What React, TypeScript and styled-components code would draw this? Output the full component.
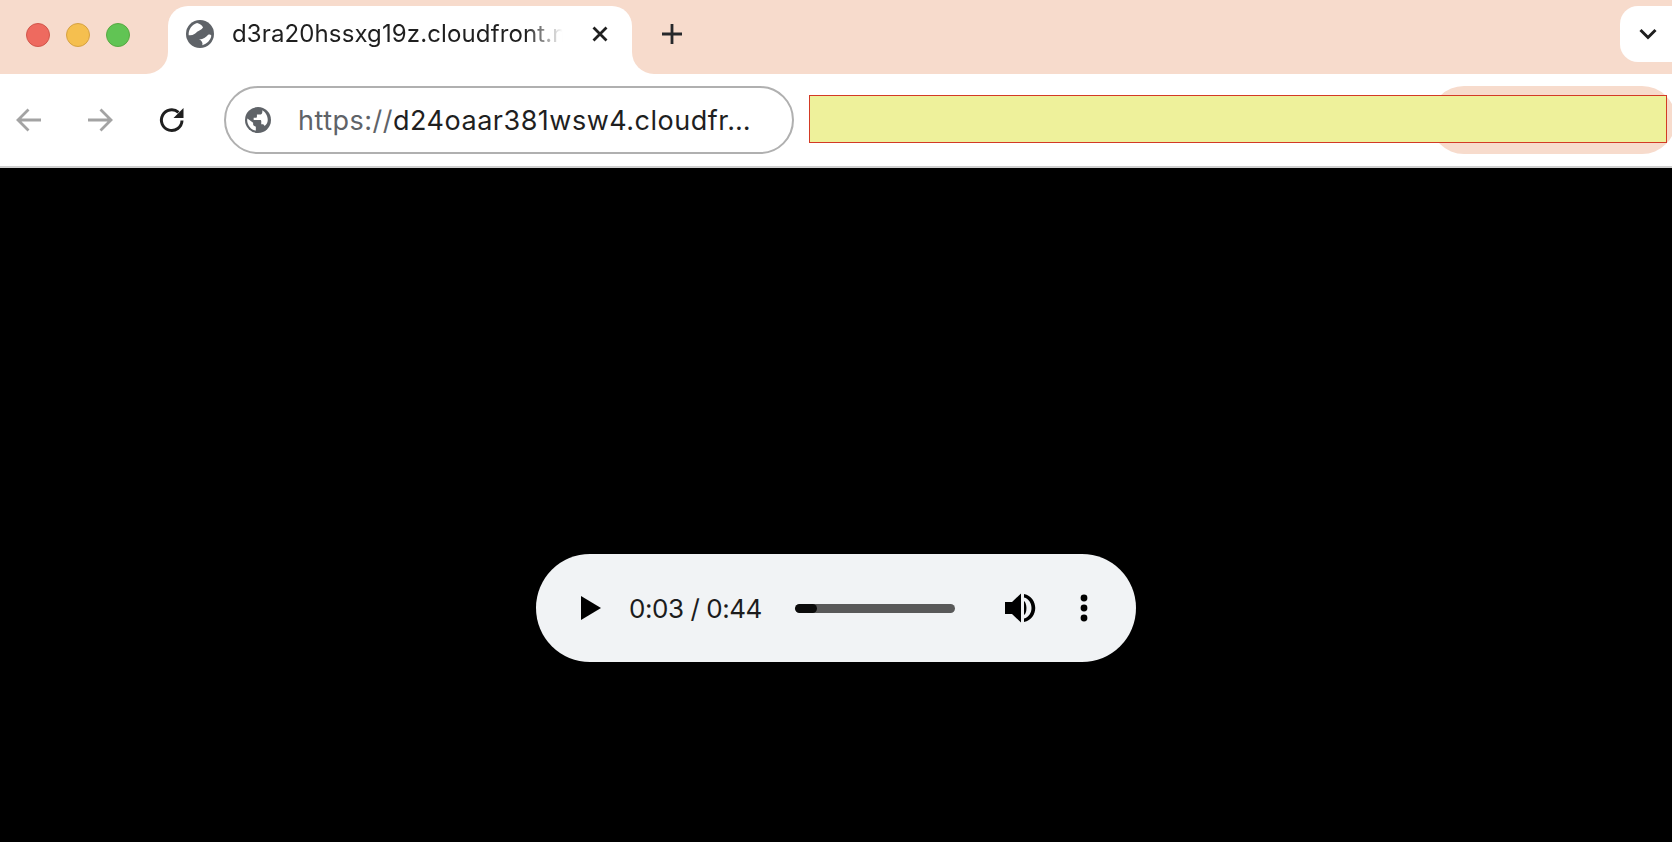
import React from "react";
import styled, { createGlobalStyle } from "styled-components";

const GlobalStyle = createGlobalStyle`
  html, body { margin: 0; padding: 0; background: #000; }
  body { font-family: Inter, "Liberation Sans", sans-serif; overflow: hidden; }
`;

const Page = styled.div`
  width: 1672px;
  height: 842px;
  display: flex;
  flex-direction: column;
  background: #000;
  overflow: hidden;
`;

const TabStrip = styled.div`
  height: 74px;
  display: flex;
  background: #fff;
`;

const StripLeft = styled.div`
  width: 168px;
  background: #f7dbcc;
  border-bottom-right-radius: 22px;
  display: flex;
  align-items: center;
  padding: 1px 0 5px 26px;
  gap: 16px;
  box-sizing: border-box;
`;

const Light = styled.span<{ $fill: string; $edge: string }>`
  width: 24px;
  height: 24px;
  border-radius: 50%;
  background: ${(p) => p.$fill};
  border: 1px solid ${(p) => p.$edge};
  box-sizing: border-box;
`;

const TabSlot = styled.div`
  width: 464px;
  background: #f7dbcc;
  padding-top: 6px;
  box-sizing: border-box;
`;

const Tab = styled.div`
  height: 68px;
  background: #fff;
  border-radius: 20px 20px 0 0;
  display: flex;
  align-items: flex-start;
  padding: 14px 0 0 18px;
  box-sizing: border-box;
`;

const TabTitle = styled.span`
  width: 334px;
  margin-left: 18px;
  font-size: 24px;
  letter-spacing: 0.12px;
  line-height: 28px;
  color: #1f1f1f;
  white-space: nowrap;
  overflow: hidden;
  -webkit-mask-image: linear-gradient(to right, #000 88%, transparent 99%);
  mask-image: linear-gradient(to right, #000 88%, transparent 99%);
`;

const TabClose = styled.svg`
  margin-left: 26px;
  margin-top: 6px;
`;

const StripRight = styled.div`
  flex: 1;
  background: #f7dbcc;
  border-bottom-left-radius: 22px;
  display: flex;
  align-items: flex-start;
  justify-content: space-between;
  padding: 6px 0 0 30px;
`;

const NewTab = styled.svg`
  margin-top: 18px;
`;

const TabMenu = styled.div`
  width: 52px;
  height: 56px;
  background: #fff;
  border-radius: 18px 0 0 18px;
  display: flex;
  align-items: center;
  justify-content: center;
  padding-left: 3px;
  box-sizing: border-box;
`;

const Toolbar = styled.div`
  height: 94px;
  box-sizing: border-box;
  background: #fff;
  border-bottom: 2px solid #cfcfcf;
  display: flex;
  align-items: center;
  position: relative;
  padding-left: 16px;
`;

const NavIcon = styled.svg<{ $gap: number }>`
  margin-right: ${(p) => p.$gap}px;
  flex: none;
`;

const Omnibox = styled.div`
  width: 570px;
  height: 68px;
  box-sizing: border-box;
  border: 2px solid #b0b0b0;
  border-radius: 34px;
  display: flex;
  align-items: center;
  padding-left: 19px;
  font-size: 27px;
  letter-spacing: 0.5px;
  color: #1f1f1f;
  white-space: nowrap;
`;

const Scheme = styled.span`
  color: #5f6368;
`;

const Url = styled.span`
  margin-left: 27px;
`;

const ProfilePill = styled.div`
  margin-left: auto;
  margin-right: -4px;
  flex: none;
  width: 246px;
  height: 68px;
  border-radius: 34px;
  background: #f7dbcc;
`;

const Redaction = styled.div`
  position: absolute;
  left: 809px;
  top: 21px;
  width: 858px;
  height: 48px;
  box-sizing: border-box;
  background: #eef19b;
  border: 1px solid #d33a25;
`;

const Stage = styled.div`
  flex: 1;
  display: flex;
  justify-content: center;
  padding-top: 386px;
`;

const AudioBar = styled.div`
  width: 600px;
  height: 108px;
  background: #f1f3f5;
  border-radius: 54px;
  display: flex;
  align-items: center;
  padding-left: 45px;
  box-sizing: border-box;
`;

const TimeText = styled.span`
  margin-left: 28px;
  width: 136px;
  font-family: Inter, "Liberation Sans", sans-serif;
  font-size: 26px;
  letter-spacing: -0.45px;
  color: #1c1c1c;
  white-space: nowrap;
`;

const Track = styled.div`
  width: 160px;
  height: 9px;
  margin-left: 30px;
  border-radius: 5px;
  background: #595959;
  overflow: hidden;
`;

const TrackFill = styled.div`
  height: 100%;
  border-radius: 5px;
  background: #0b0b0b;
`;

const VolumeIcon = styled.svg`
  margin-left: 50px;
`;

const MoreIcon = styled.svg`
  margin-left: 43px;
`;

const TabGlobe = () => (
  <svg width="28" height="28" viewBox="0 0 24 24">
    <circle cx="12" cy="12" r="12" fill="#5f6368" />
    <path d="M2.3 13 C2 8 5 4 9.5 2.6 C12 3.4 14 4.6 14.6 6.4 C13.5 8.4 11 9 9.5 10 C8.2 11.4 6 13.6 2.3 13Z" fill="#fff" />
    <path d="M11 16.6 C14 17 17 15 19 12.6 C20.4 12 21.4 12.4 21.7 13.6 C21 17.4 18 20.6 14 21.6 C14.6 19.6 13.4 17.6 11 16.6Z" fill="#fff" />
  </svg>
);

const BarGlobe = () => (
  <svg width="26" height="26" viewBox="0 0 24 24">
    <circle cx="12" cy="12" r="12" fill="#5f6368" />
    <path d="M2.2 10.5 L7.5 14.5 V16 C7.5 17.2 8.8 18 10 18 V21.8 C5.6 21.2 2 17 2 12 C2 11.5 2.1 11 2.2 10.5Z" fill="#fff" />
    <path d="M16 3.1 V4.5 C16 5.8 15 7 13.5 7 H11 V9 C11 9.6 10.5 10 10 10 H8 V12 H14 C14.6 12 15 12.4 15 13 V16 H16 C17 16 17.8 16.6 18 17.5 C19.5 16.5 21 14.8 21 12 C21 8 18.5 4.6 16 3.1Z" fill="#fff" />
  </svg>
);

export default function App() {
  return (
    <Page>
      <GlobalStyle />
      <TabStrip>
        <StripLeft>
          <Light $fill="#ee6a5f" $edge="#d1564b" />
          <Light $fill="#f5bf4f" $edge="#d6a243" />
          <Light $fill="#61c454" $edge="#58a942" />
        </StripLeft>
        <TabSlot>
          <Tab>
            <TabGlobe />
            <TabTitle>d3ra20hssxg19z.cloudfront.net</TabTitle>
            <TabClose width="16" height="16" viewBox="0 0 16 16">
              <path d="M1.5 1.5 L14.5 14.5 M14.5 1.5 L1.5 14.5" stroke="#1f1f1f" strokeWidth="2.8" fill="none" />
            </TabClose>
          </Tab>
        </TabSlot>
        <StripRight>
          <NewTab width="20" height="20" viewBox="0 0 20 20">
            <path d="M10 0 V20 M0 10 H20" stroke="#26282b" strokeWidth="2.8" fill="none" />
          </NewTab>
          <TabMenu>
            <svg width="18" height="12" viewBox="0 0 18 12">
              <path d="M1.5 2 L9 9.5 L16.5 2" stroke="#1f1f1f" strokeWidth="3" fill="none" />
            </svg>
          </TabMenu>
        </StripRight>
      </TabStrip>
      <Toolbar>
        <NavIcon $gap={45} width="26" height="26" viewBox="0 0 26 26">
          <path d="M25 13 H2 M12.5 2.5 L2 13 L12.5 23.5" stroke="#a3a3a3" strokeWidth="2.8" fill="none" />
        </NavIcon>
        <NavIcon $gap={46} width="26" height="26" viewBox="0 0 26 26">
          <path d="M1 13 H24 M13.5 2.5 L24 13 L13.5 23.5" stroke="#a3a3a3" strokeWidth="2.8" fill="none" />
        </NavIcon>
        <NavIcon $gap={39} width="26" height="26" viewBox="0 0 26 26">
          <path d="M23 13.5 A10.3 10.3 0 1 1 19.5 5.4" stroke="#1f1f1f" strokeWidth="3" fill="none" />
          <path d="M24.5 1 V11 H14.5 Z" fill="#1f1f1f" />
        </NavIcon>
        <Omnibox>
          <BarGlobe />
          <Url>
            <Scheme>https://</Scheme>d24oaar381wsw4.cloudfr…
          </Url>
        </Omnibox>
        <ProfilePill />
        <Redaction />
      </Toolbar>
      <Stage>
        <AudioBar>
          <svg width="20" height="24" viewBox="0 0 20 24">
            <path d="M0 0 L20 12 L0 24 Z" fill="#000" />
          </svg>
          <TimeText>0:03 / 0:44</TimeText>
          <Track>
            <TrackFill style={{ width: `${(3 / 22) * 100}%` }} />
          </Track>
          <VolumeIcon width="32" height="30" viewBox="0 0 32 30">
            <path d="M0 9 H7 L16 0.5 V29.5 L7 21 H0 Z" fill="#000" />
            <path d="M19 8 C22 10 22.5 20 19 22 Z" fill="#000" />
            <path d="M19 1 C34 4 34 26 19 29 V25.5 C29 23 29 7 19 4.5 Z" fill="#000" />
          </VolumeIcon>
          <MoreIcon width="8" height="28" viewBox="0 0 8 28">
            <circle cx="4" cy="4" r="3.4" fill="#000" />
            <circle cx="4" cy="14" r="3.4" fill="#000" />
            <circle cx="4" cy="24" r="3.4" fill="#000" />
          </MoreIcon>
        </AudioBar>
      </Stage>
    </Page>
  );
}
